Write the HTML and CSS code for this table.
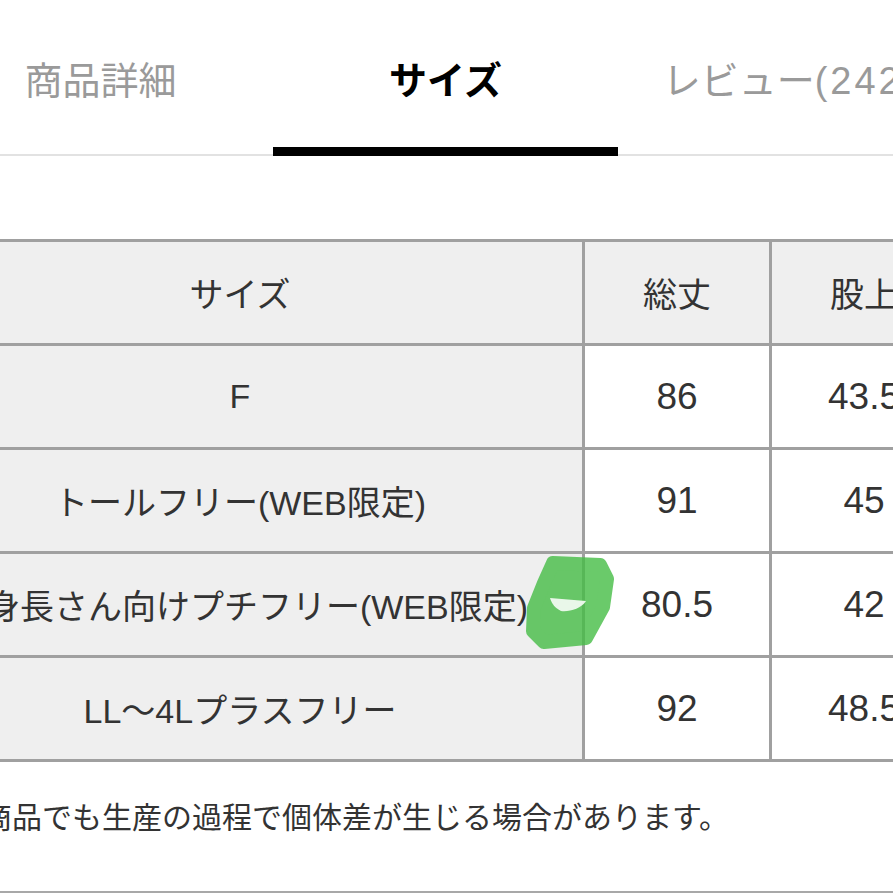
FILE: index.html
```html
<!DOCTYPE html>
<html lang="ja">
<head>
<meta charset="utf-8">
<title>サイズ</title>
<link rel="stylesheet" href="styles.css">
</head>
<body>
<div class="page">
  <nav class="tabs">
    <div class="tab">商品詳細</div>
    <div class="tab tab-active">サイズ</div>
    <div class="tab">レビュー<span class="count">(242)</span></div>
  </nav>
  <div class="size-table">
    <div class="cell head">サイズ</div>
    <div class="cell head">総丈</div>
    <div class="cell head">股上</div>

    <div class="cell label">F</div>
    <div class="cell num">86</div>
    <div class="cell num">43.5</div>

    <div class="cell label">トールフリー(WEB限定)</div>
    <div class="cell num">91</div>
    <div class="cell num">45</div>

    <div class="cell label">低身長さん向けプチフリー(WEB限定)</div>
    <div class="cell num">80.5</div>
    <div class="cell num">42</div>

    <div class="cell label">LL～4Lプラスフリー</div>
    <div class="cell num">92</div>
    <div class="cell num">48.5</div>
  </div>
  <p class="note">同じ商品でも生産の過程で個体差が生じる場合があります。</p>
  <div class="bottom-rule"></div>
  <svg class="marker" width="100" height="100" viewBox="0 0 100 100" aria-hidden="true">
    <g opacity="0.8">
      <polygon points="33,11 80,13 87,27 83,55 66,86 24,90 13,79 14,56 24,31" fill="#46bd46" stroke="#46bd46" stroke-width="14" stroke-linejoin="round"/>
    </g>
    <path d="M30,46 L66,49 C61,57 49,60 41,59 C35,56 32,52 30,46 Z" fill="#f4fbf4" fill-opacity="0.92"/>
  </svg>
</div>
</body>
</html>
```

FILE: styles.css
```css
html, body {
  margin: 0;
  padding: 0;
  background: #ffffff;
}
body {
  width: 893px;
  height: 893px;
  overflow: hidden;
  font-family: "Liberation Sans", "Noto Sans CJK JP", sans-serif;
  color: #333333;
}
.page {
  position: relative;
  width: 893px;
  height: 893px;
  overflow: hidden;
}
.tabs {
  display: flex;
  margin-left: -72px;
  width: 1035px;
  height: 156px;
  box-sizing: border-box;
  border-bottom: 2px solid #e2e2e2;
}
.tab {
  flex: 0 0 345px;
  height: 154px;
  box-sizing: border-box;
  display: flex;
  justify-content: center;
  align-items: flex-start;
  padding-top: 59px;
  font-size: 38px;
  line-height: 44px;
  color: #9a9a9a;
  white-space: nowrap;
}
.count {
  letter-spacing: 3px;
}
.tab-active {
  height: 156px;
  margin-bottom: -2px;
  border-bottom: 9px solid #000000;
  color: #000000;
  font-weight: bold;
}
.size-table {
  margin-top: 83px;
  margin-left: -105px;
  width: max-content;
  display: grid;
  grid-template-columns: 684px 184px 184px;
  grid-auto-rows: 101px;
  gap: 3px;
  padding: 3px;
  background: #a0a0a0;
}
.cell {
  display: flex;
  align-items: center;
  justify-content: center;
  font-size: 34px;
  white-space: nowrap;
  background: #ffffff;
  color: #333333;
}
.head, .label {
  background: #efefef;
}
.num {
  font-size: 37px;
}
.note {
  margin: 36px 0 0 -78px;
  font-size: 30px;
  line-height: 40px;
  white-space: nowrap;
  color: #333333;
}
.bottom-rule {
  margin-top: 53px;
  height: 3px;
  background: #a8a8a8;
}
.marker {
  position: absolute;
  left: 520px;
  top: 552px;
}
```
